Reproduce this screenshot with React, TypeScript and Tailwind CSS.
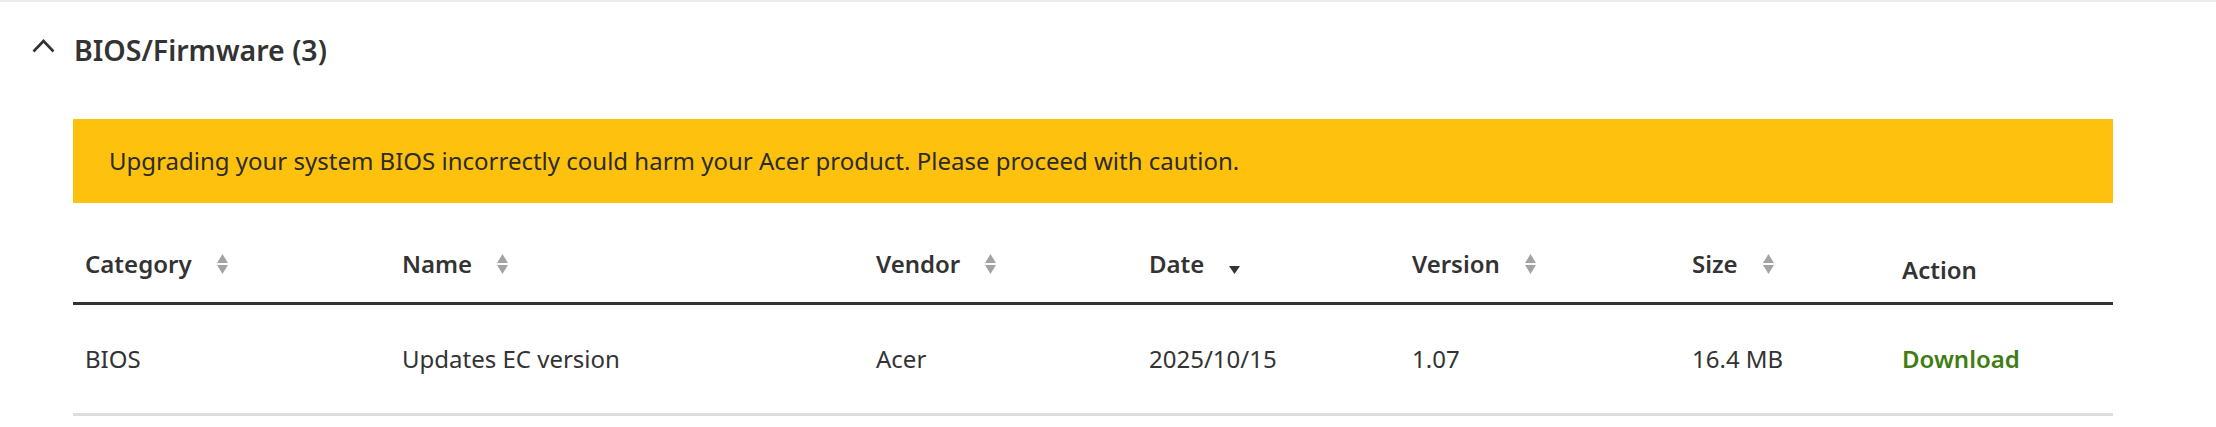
type Col = { label: string; sort: "both" | "desc" | null };

const COLUMNS: Col[] = [
  { label: "Category", sort: "both" },
  { label: "Name", sort: "both" },
  { label: "Vendor", sort: "both" },
  { label: "Date", sort: "desc" },
  { label: "Version", sort: "both" },
  { label: "Size", sort: "both" },
  { label: "Action", sort: null },
];

const ROWS = [
  {
    category: "BIOS",
    name: "Updates EC version",
    vendor: "Acer",
    date: "2025/10/15",
    version: "1.07",
    size: "16.4 MB",
  },
];

const GRID =
  "grid grid-cols-[317px_474px_273px_263px_280px_210px_1fr]";

function SortBoth() {
  return (
    <svg width="11" height="20" viewBox="0 0 11 20" className="shrink-0">
      <path d="M5.5 0 L11 9 L0 9 Z" fill="#a3a3a3" />
      <path d="M0 11 L11 11 L5.5 20 Z" fill="#a3a3a3" />
    </svg>
  );
}

function SortDesc() {
  return (
    <svg width="11" height="20" viewBox="0 0 11 20" className="shrink-0">
      <path d="M0 12 L11 12 L5.5 20 Z" fill="#333333" />
    </svg>
  );
}

function HeaderCell({ col }: { col: Col }) {
  return (
    <div
      className={`flex items-center gap-[25px] pl-3 ${col.sort ? "pb-[22px]" : "pb-[16px]"}`}
    >
      <span className="text-[24px] font-semibold text-[#333333] leading-[32px]">
        {col.label}
      </span>
      {col.sort === "both" && <SortBoth />}
      {col.sort === "desc" && <SortDesc />}
    </div>
  );
}

export default function App() {
  return (
    <div className="w-full bg-white border-t-2 border-[#ededed] font-['Noto_Sans',sans-serif] text-[#333333]">
      {/* Section header */}
      <div className="flex items-start pt-[29px] pl-[32px]">
        <svg width="23" height="14" viewBox="0 0 23 14" className="mt-[8px] shrink-0">
          <path
            d="M1.5 12.5 L11.5 2 L21.5 12.5"
            fill="none"
            stroke="#333333"
            strokeWidth="2.6"
          />
        </svg>
        <h2 className="ml-[19px] text-[28.5px] font-semibold leading-[38px]">
          BIOS/Firmware (3)
        </h2>
      </div>

      <div className="ml-[73px] mr-[103px] mt-[50px]">
        {/* Warning banner */}
        <div className="flex items-center h-[84px] bg-[#fec10d] pl-[36px]">
          <p className="text-[24px] leading-[32px] text-[#2b2b2b]">
            Upgrading your system BIOS incorrectly could harm your Acer product.
            Please proceed with caution.
          </p>
        </div>

        {/* Table */}
        <div className={`${GRID} h-[102px] items-end border-b-[3px] border-[#333333]`}>
          {COLUMNS.map((c) => (
            <HeaderCell key={c.label} col={c} />
          ))}
        </div>

        {ROWS.map((r) => (
          <div
            key={r.name}
            className={`${GRID} h-[111px] items-center border-b-[3px] border-[#dddddd] text-[24px] leading-[32px] text-[#333333]`}
          >
            <span className="pl-3">{r.category}</span>
            <span className="pl-3">{r.name}</span>
            <span className="pl-3">{r.vendor}</span>
            <span className="pl-3">{r.date}</span>
            <span className="pl-3">{r.version}</span>
            <span className="pl-3">{r.size}</span>
            <a href="#" className="pl-3 font-semibold text-[#3f7d12]">
              Download
            </a>
          </div>
        ))}
      </div>
    </div>
  );
}
